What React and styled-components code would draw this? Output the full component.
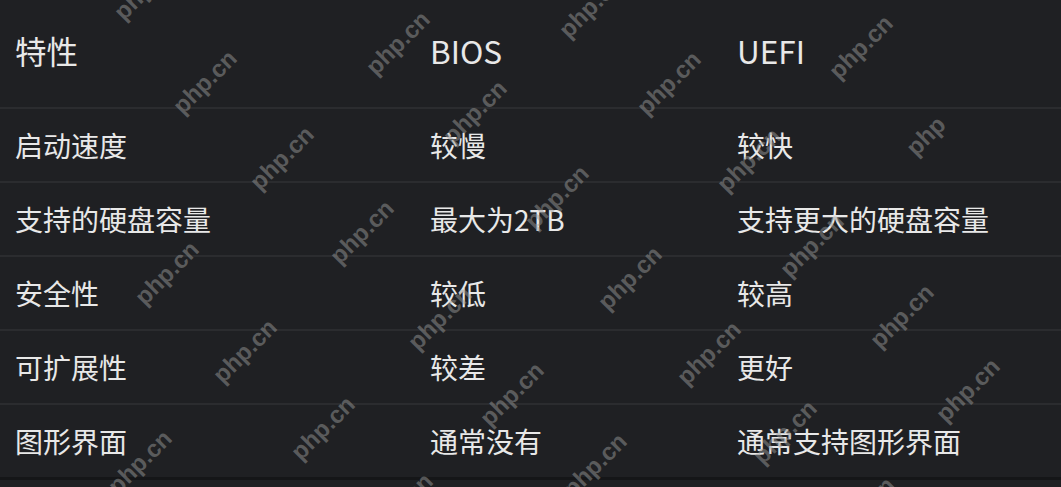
import React from "react";
import styled, { createGlobalStyle } from "styled-components";

const Global = createGlobalStyle`
  html, body { margin: 0; padding: 0; background: #1f2023; }
  body { font-family: "Noto Sans CJK SC", "Noto Sans", sans-serif; }
  *, *::before, *::after { box-sizing: border-box; }
`;

const Page = styled.div`
  position: relative;
  width: 1061px;
  height: 487px;
  overflow: hidden;
  background: #1f2023;
`;

const Table = styled.div`
  display: grid;
  grid-template-columns: 415px 307px 1fr;
  border-bottom: 3px solid #151618;
`;

const Cell = styled.div`
  display: flex;
  align-items: center;
  padding: ${(p) => (p.$head ? "0 16px 6px 15px" : "0 16px 0 15px")};
  height: ${(p) => (p.$head ? "109px" : p.$last ? "72px" : "74px")};
  border-bottom: ${(p) => (p.$last ? "none" : "2px solid #2b2c2f")};
  color: #e8e8e8;
  font-size: ${(p) => (p.$head ? "31.5px" : "28px")};
  font-weight: 400;
  line-height: 1;
  white-space: nowrap;
`;

const Overlay = styled.div`
  position: absolute;
  inset: 0;
  pointer-events: none;
`;

const Mark = styled.span`
  position: absolute;
  left: ${(p) => p.$x}px;
  top: ${(p) => p.$y}px;
  transform: translate(-50%, -50%) rotate(-45deg);
  font-family: "Liberation Sans", Arial, sans-serif;
  font-weight: 700;
  font-size: 24px;
  line-height: 1;
  color: rgba(150, 150, 150, 0.5);
  white-space: nowrap;
`;

const head = ["特性", "BIOS", "UEFI"];
const rows = [
  ["启动速度", "较慢", "较快"],
  ["支持的硬盘容量", "最大为2TB", "支持更大的硬盘容量"],
  ["安全性", "较低", "较高"],
  ["可扩展性", "较差", "更好"],
  ["图形界面", "通常没有", "通常支持图形界面"],
];

const marks = [
  [146, -12], [205, 82], [282, 158], [362, 232], [440, 318], [512, 394], [595, 465],
  [398, 43], [475, 112], [557, 197], [630, 278], [709, 353], [785, 432], [863, 509],
  [591, 6], [669, 83], [749, 160], [812, 245], [902, 316], [968, 390],
  [861, 47], [167, 273], [245, 351], [323, 428], [401, 505], [140, 462],
];

export default function App() {
  return (
    <Page>
      <Global />
      <Table>
        {head.map((h) => (
          <Cell key={h} $head>{h}</Cell>
        ))}
        {rows.map((r, i) =>
          r.map((c, j) => (
            <Cell key={i + "-" + j} $last={i === rows.length - 1}>
              {c}
            </Cell>
          ))
        )}
      </Table>
      <Overlay>
        {marks.map(([x, y], i) => (
          <Mark key={i} $x={x} $y={y}>php.cn</Mark>
        ))}
        <Mark $x={926} $y={136}>php</Mark>
      </Overlay>
    </Page>
  );
}
